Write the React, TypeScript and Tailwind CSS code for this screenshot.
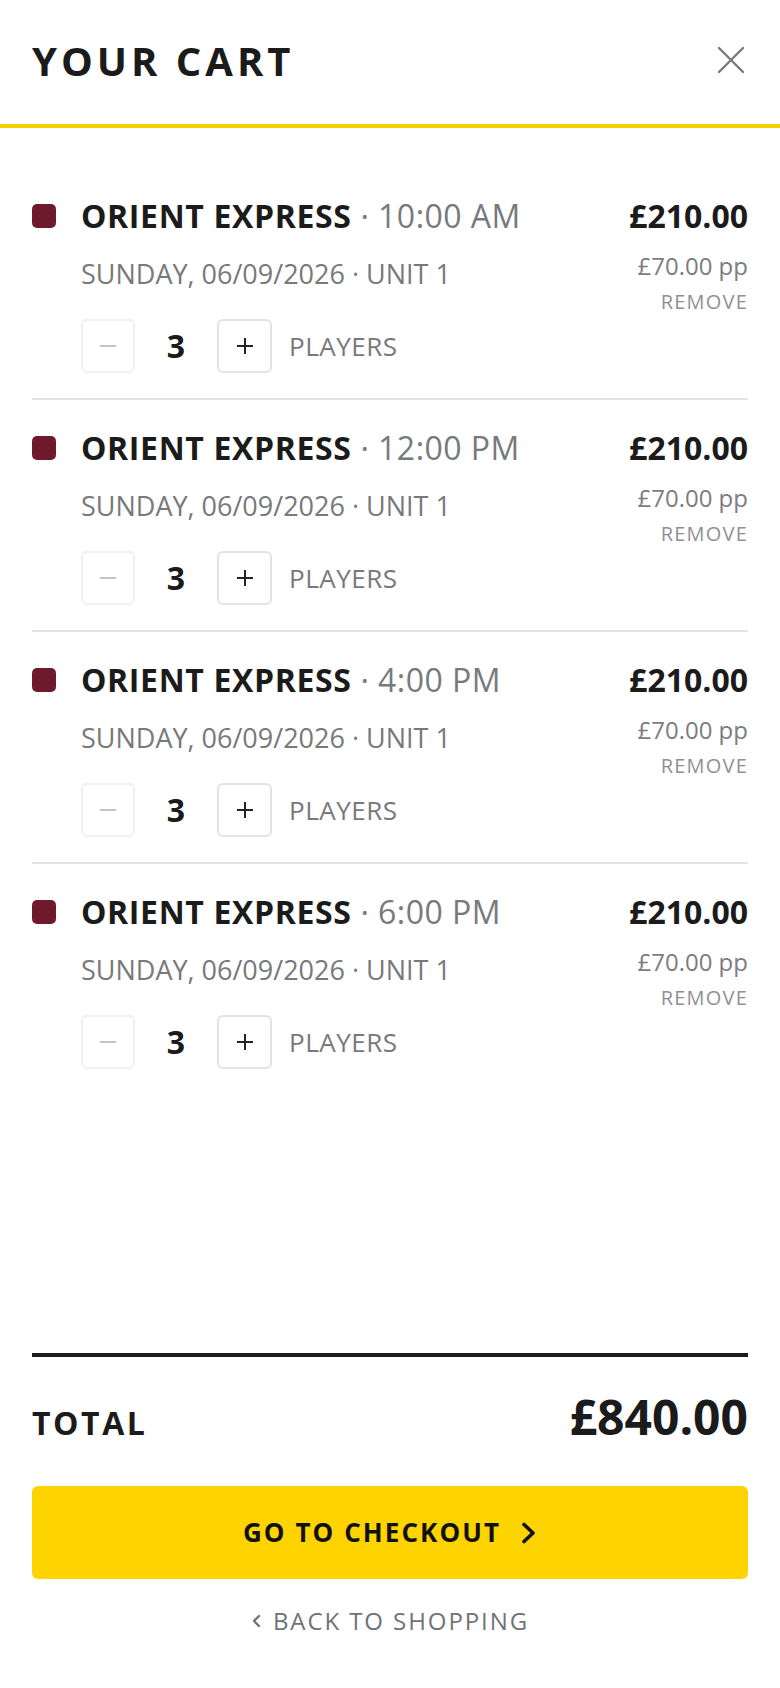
const items = [
  { time: "10:00 AM" },
  { time: "12:00 PM" },
  { time: "4:00 PM" },
  { time: "6:00 PM" },
];

function CartItem({ time, last }: { time: string; last: boolean }) {
  return (
    <div className={last ? "flex pt-[28px] pb-[25px]" : "flex pt-[28px] pb-[25px] border-b-2 border-[#e4e4e4]"}>
      <div className="h-[40px] w-[49px] flex items-center shrink-0">
        <span className="block w-6 h-6 rounded-[5px] bg-[#6f1a2c]" />
      </div>
      <div className="flex-1 min-w-0">
        <div className="h-[40px] leading-[40px] text-[32px] whitespace-nowrap">
          <span className="font-bold text-[#1b1b1b] tracking-[0.02em]">ORIENT EXPRESS</span>
          <span className="text-[#777a7d] tracking-[0.015em]"> · {time}</span>
        </div>
        <div className="mt-[20px] h-[36px] leading-[36px] text-[27px] text-[#77797b] whitespace-nowrap">
          SUNDAY, 06/09/2026 · UNIT 1
        </div>
        <div className="mt-[27px] flex items-center">
          <button className="w-[54px] h-[54px] rounded-[6px] border-2 border-[#f0f0f0] flex items-center justify-center">
            <span className="block w-[16px] h-[2px] bg-[#c4c4c4]" />
          </button>
          <span className="w-[82px] text-center text-[32px] font-bold text-[#1b1b1b] leading-none">3</span>
          <button className="w-[55px] h-[54px] rounded-[6px] border-2 border-[#e2e2e2] flex items-center justify-center relative">
            <span className="block w-[16px] h-[2px] bg-[#222]" />
            <span className="absolute w-[2px] h-[16px] bg-[#222]" />
          </button>
          <span className="ml-[17px] text-[26px] text-[#77797b] tracking-[0.02em]">PLAYERS</span>
        </div>
      </div>
      <div className="flex flex-col items-end shrink-0">
        <div className="h-[40px] leading-[40px] text-[32px] font-bold text-[#1b1b1b]">£210.00</div>
        <div className="mt-[14px] h-[32px] leading-[32px] text-[24px] text-[#7b7d80]">£70.00 pp</div>
        <div className="mt-[8px] h-[24px] leading-[24px] text-[20px] text-[#8e9093] tracking-[0.06em]">REMOVE</div>
      </div>
    </div>
  );
}

export default function App() {
  return (
    <div className="h-[1688px] bg-white flex flex-col font-['Open_Sans',sans-serif]">
      <header className="h-[128px] border-b-4 border-[#f7d000] px-8 flex items-center justify-between">
        <h1 className="text-[40px] leading-none font-bold tracking-[0.1em] text-[#1b1b1b] mt-[-2px]">YOUR CART</h1>
        <svg width="28" height="28" viewBox="0 0 28 28" fill="none" className="mr-[3px] mt-[-4px]">
          <path d="M2 2 L26 26 M26 2 L2 26" stroke="#7a7a7a" strokeWidth="2.4" strokeLinecap="round" />
        </svg>
      </header>

      <div className="px-8 pt-[40px] flex-1">
        {items.map((it, i) => (
          <CartItem key={it.time} time={it.time} last={i === items.length - 1} />
        ))}
      </div>

      <footer className="px-8 pb-[51px]">
        <div className="border-t-4 border-[#1b1b1b] pt-[36px] flex items-baseline justify-between">
          <span className="text-[32px] font-bold tracking-[0.08em] text-[#1b1b1b]">TOTAL</span>
          <span className="text-[48px] leading-[48px] font-bold text-[#1b1b1b]">£840.00</span>
        </div>
        <button className="mt-[39px] w-full h-[93px] rounded-[6px] bg-[#fdd300] flex items-center justify-center gap-[20px]">
          <span className="text-[26px] font-bold tracking-[0.08em] text-[#111]">GO TO CHECKOUT</span>
          <svg width="16" height="22" viewBox="0 0 16 22" fill="none">
            <path d="M3 2.5 L12 11 L3 19.5" stroke="#111" strokeWidth="3.6" strokeLinecap="round" strokeLinejoin="round" />
          </svg>
        </button>
        <div className="mt-[26px] flex items-center justify-center gap-[11px] h-[32px]">
          <svg width="11" height="14" viewBox="0 0 11 14" fill="none">
            <path d="M8 2 L3 7 L8 12" stroke="#6f7377" strokeWidth="2.4" strokeLinecap="round" strokeLinejoin="round" />
          </svg>
          <span className="text-[24px] leading-[32px] tracking-[0.08em] text-[#6f7377]">BACK TO SHOPPING</span>
        </div>
      </footer>
    </div>
  );
}
